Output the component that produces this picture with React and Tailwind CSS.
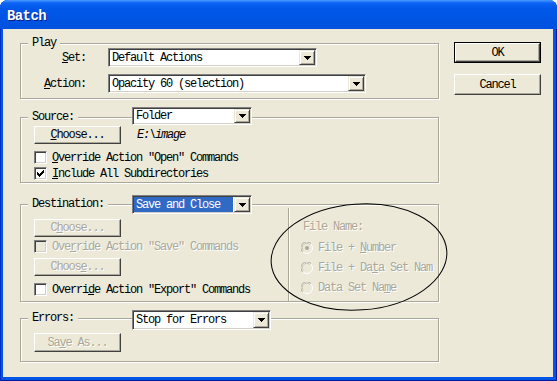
import React from "react";

const DIS = "text-[#aca899] [text-shadow:1px_1px_0_#fff]";

function Arrow() {
  return (
    <svg width="7" height="4" shapeRendering="crispEdges">
      <rect x="0" y="0" width="7" height="1" fill="#000" />
      <rect x="1" y="1" width="5" height="1" fill="#000" />
      <rect x="2" y="2" width="3" height="1" fill="#000" />
      <rect x="3" y="3" width="1" height="1" fill="#000" />
    </svg>
  );
}

function Check() {
  const cols = [2, 3, 4, 3, 2, 1, 0];
  return (
    <svg width="7" height="7" shapeRendering="crispEdges">
      {cols.map((y, x) => (
        <rect key={x} x={x} y={y} width="1" height="3" fill="#000" />
      ))}
    </svg>
  );
}

function Combo({ className, children, selected }) {
  return (
    <div
      className={
        "flex bg-white border border-t-[#808080] border-l-[#808080] border-r-white border-b-white p-[1px] shadow-[inset_1px_1px_0_#404040,inset_-1px_-1px_0_#d4d0c8] " +
        className
      }
    >
      <div
        className={
          "flex-1 flex items-center pl-[2px] " +
          (selected ? "bg-[#316ac5] text-white mr-[1px]" : "")
        }
      >
        {children}
      </div>
      <div className="w-[16px] flex items-center justify-center bg-[#ece9d8] border border-t-[#ece9d8] border-l-[#ece9d8] border-r-[#404040] border-b-[#404040] shadow-[inset_1px_1px_0_#fff,inset_-1px_-1px_0_#aca899]">
        <Arrow />
      </div>
    </div>
  );
}

function Btn({ className, children, disabled, def }) {
  const inner = (
    <div
      className={
        "flex flex-1 items-center justify-center bg-[#ece9d8] border border-t-white border-l-white border-r-[#404040] border-b-[#404040] shadow-[inset_-1px_-1px_0_#aca899] " +
        (disabled ? DIS : "")
      }
    >
      {children}
    </div>
  );
  if (def) {
    return <div className={"flex border border-black " + className}>{inner}</div>;
  }
  return <div className={"flex " + className}>{inner}</div>;
}

function CheckBox({ checked, disabled }) {
  return (
    <div
      className={
        "w-[13px] h-[13px] flex items-center justify-center border border-t-[#808080] border-l-[#808080] border-r-white border-b-white shadow-[inset_1px_1px_0_#404040,inset_-1px_-1px_0_#d4d0c8] " +
        (disabled ? "bg-[#ece9d8]" : "bg-white")
      }
    >
      {checked && <Check />}
    </div>
  );
}

function Radio({ on }) {
  return (
    <svg width="12" height="12" viewBox="0 0 12 12">
      <circle cx="6" cy="6" r="5.5" fill="#ece9d8" stroke="#fff" />
      <path d="M1.6 9.9 A5.5 5.5 0 0 1 9.9 1.6" fill="none" stroke="#aca899" />
      <path d="M2.6 8.9 A4.3 4.3 0 0 1 8.9 2.6" fill="none" stroke="#c8c5b5" />
      {on && <circle cx="6" cy="6" r="2" fill="#aca899" />}
    </svg>
  );
}

function Legend({ children, className }) {
  return (
    <div
      className={
        "absolute left-[7px] top-[-7px] px-[4px] bg-[#ece9d8] leading-[12px] " +
        (className || "")
      }
    >
      {children}
    </div>
  );
}

const GROUP =
  "relative w-[419px] border border-[#aca899] shadow-[inset_1px_1px_0_#fff,1px_1px_0_#fff]";

export default function App() {
  return (
    <div className="relative w-[557px] h-[381px] flex flex-col overflow-hidden rounded-t-[8px] bg-[#0055e5] shadow-[inset_-1px_-1px_0_#001a9e,inset_1px_0_0_#0030c0] font-['Liberation_Mono',monospace] text-[12px] leading-[12px] tracking-[-1.2px] text-black">
      {/* title bar */}
      <div className="h-[29px] shrink-0 flex items-center pl-[7px] pt-[3px] bg-[linear-gradient(180deg,#4a9bff_0%,#0d63f5_10%,#0057e8_30%,#0054e3_70%,#0050dd_100%)]">
        <span className="text-white font-bold text-[14px] tracking-[-0.6px] [text-shadow:1px_1px_0_#0a1a80]">
          Batch
        </span>
      </div>

      {/* body */}
      <div className="flex-1 ml-[3px] mr-[4px] mb-[4px] bg-[#ece9d8] flex">
        {/* left column */}
        <div className="pl-[17px] pt-[14px] flex flex-col">
          {/* Play */}
          <div className={GROUP + " h-[56px]"}>
            <Legend>Play</Legend>
            <div className="flex flex-col gap-[7px] pt-[4px]">
              <div className="flex items-center">
                <div className="w-[65px] text-right">
                  <u>S</u>et:
                </div>
                <Combo className="ml-[22px] w-[209px] h-[19px]">Default Actions</Combo>
              </div>
              <div className="flex items-center">
                <div className="w-[65px] text-right">
                  <u>A</u>ction:
                </div>
                <Combo className="ml-[22px] w-[258px] h-[19px]">Opacity 60 (selection)</Combo>
              </div>
            </div>
          </div>

          {/* Source */}
          <div className={GROUP + " h-[66px] mt-[18px]"}>
            <Legend>Source:</Legend>
            <Combo className="absolute left-[111px] top-[-11px] w-[120px] h-[18px]">Folder</Combo>
            <div className="flex flex-col pl-[13px] pt-[8px]">
              <div className="flex items-center">
                <Btn className="w-[87px] h-[18px]">
                  <span>
                    <u>C</u>hoose...
                  </span>
                </Btn>
                <span className="ml-[16px] italic">{"E:\\image"}</span>
              </div>
              <div className="flex items-center mt-[7px]">
                <CheckBox />
                <span className="ml-[5px]">
                  <u>O</u>verride Action "Open" Commands
                </span>
              </div>
              <div className="flex items-center mt-[3px]">
                <CheckBox checked />
                <span className="ml-[5px]">
                  <u>I</u>nclude All Subdirectories
                </span>
              </div>
            </div>
          </div>

          {/* Destination */}
          <div className={GROUP + " h-[98px] mt-[21px] flex"}>
            <Legend>Destination:</Legend>
            <Combo selected className="absolute left-[111px] top-[-10px] w-[120px] h-[19px]">
              Save and Close
            </Combo>
            <div className="flex-1 flex flex-col pl-[13px] pt-[14px]">
              <Btn disabled className="w-[87px] h-[18px]">
                <span>
                  C<u>h</u>oose...
                </span>
              </Btn>
              <div className="flex items-center mt-[3px]">
                <CheckBox disabled />
                <span className={"ml-[5px] " + DIS}>
                  Ove<u>r</u>ride Action "Save" Commands
                </span>
              </div>
              <Btn disabled className="w-[87px] h-[18px] mt-[5px]">
                <span>
                  Choos<u>e</u>...
                </span>
              </Btn>
              <div className="flex items-center mt-[7px]">
                <CheckBox />
                <span className="ml-[5px]">
                  Overri<u>d</u>e Action "Export" Commands
                </span>
              </div>
            </div>
            <div className="w-[150px] mt-[3px] border-l border-[#aca899] shadow-[inset_1px_0_0_#fff] pl-[12px] pt-[13px] flex flex-col">
              <div className={"ml-[2px] " + DIS}>File Name:</div>
              <div className="flex flex-col gap-[8px] mt-[9px]">
                <div className="flex items-center h-[12px]">
                  <Radio on />
                  <span className={"ml-[5px] " + DIS}>
                    File + <u>N</u>umber
                  </span>
                </div>
                <div className="flex items-center h-[12px]">
                  <Radio />
                  <span className={"ml-[5px] " + DIS}>
                    File + Da<u>t</u>a Set Nam
                  </span>
                </div>
                <div className="flex items-center h-[12px]">
                  <Radio />
                  <span className={"ml-[5px] " + DIS}>
                    Data Set Na<u>m</u>e
                  </span>
                </div>
              </div>
            </div>
          </div>

          {/* Errors */}
          <div className={GROUP + " h-[44px] mt-[16px]"}>
            <Legend>Errors:</Legend>
            <Combo className="absolute left-[111px] top-[-9px] w-[139px] h-[20px]">Stop for Errors</Combo>
            <div className="pl-[13px] pt-[14px]">
              <Btn disabled className="w-[87px] h-[19px]">
                <span>
                  Sa<u>v</u>e As...
                </span>
              </Btn>
            </div>
          </div>
        </div>

        {/* right column */}
        <div className="ml-[15px] pt-[13px] flex flex-col">
          <Btn def className="w-[87px] h-[21px]">OK</Btn>
          <Btn className="w-[87px] h-[21px] mt-[11px]">Cancel</Btn>
        </div>
      </div>

      {/* hand-drawn annotation ellipse */}
      <svg
        className="absolute left-[266px] top-[199px] pointer-events-none"
        width="186"
        height="116"
        viewBox="0 0 186 116"
      >
        <ellipse
          cx="93"
          cy="58"
          rx="88"
          ry="53"
          transform="rotate(-4 93 58)"
          fill="none"
          stroke="#000"
          strokeWidth="1"
        />
      </svg>
    </div>
  );
}
